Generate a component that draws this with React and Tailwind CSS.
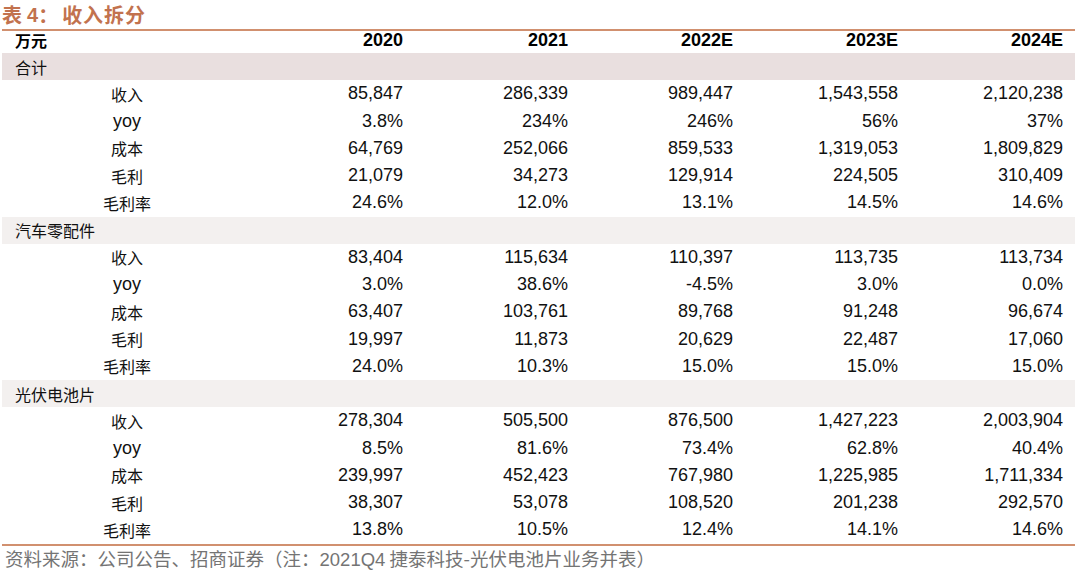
const cols = ["2020", "2021", "2022E", "2023E", "2024E"];

const sections = [
  {
    name: "合计",
    bg: "bg-[#e9dfdf]",
    rows: [
      ["收入", "85,847", "286,339", "989,447", "1,543,558", "2,120,238"],
      ["yoy", "3.8%", "234%", "246%", "56%", "37%"],
      ["成本", "64,769", "252,066", "859,533", "1,319,053", "1,809,829"],
      ["毛利", "21,079", "34,273", "129,914", "224,505", "310,409"],
      ["毛利率", "24.6%", "12.0%", "13.1%", "14.5%", "14.6%"],
    ],
  },
  {
    name: "汽车零配件",
    bg: "bg-[#f3f0ef]",
    rows: [
      ["收入", "83,404", "115,634", "110,397", "113,735", "113,734"],
      ["yoy", "3.0%", "38.6%", "-4.5%", "3.0%", "0.0%"],
      ["成本", "63,407", "103,761", "89,768", "91,248", "96,674"],
      ["毛利", "19,997", "11,873", "20,629", "22,487", "17,060"],
      ["毛利率", "24.0%", "10.3%", "15.0%", "15.0%", "15.0%"],
    ],
  },
  {
    name: "光伏电池片",
    bg: "bg-[#f3f0ef]",
    rows: [
      ["收入", "278,304", "505,500", "876,500", "1,427,223", "2,003,904"],
      ["yoy", "8.5%", "81.6%", "73.4%", "62.8%", "40.4%"],
      ["成本", "239,997", "452,423", "767,980", "1,225,985", "1,711,334"],
      ["毛利", "38,307", "53,078", "108,520", "201,238", "292,570"],
      ["毛利率", "13.8%", "10.5%", "12.4%", "14.1%", "14.6%"],
    ],
  },
];

const cjk = "font-['Noto_Sans_CJK_SC',sans-serif]";
const num = "font-['Liberation_Sans',Arial,sans-serif]";
const grid = "grid grid-cols-[250px_151px_165px_165px_165px_165px]";

export default function App() {
  return (
    <div className="w-[1080px] h-[576px] bg-white overflow-hidden">
      <div className="pl-[2px] pr-[5px]">
        <div className="h-[29px] flex items-center text-[#c2724e] font-bold text-[20px] leading-none">
          <span className={cjk}>表</span>
          <span className={`${num} ml-[5px]`}>4</span>
          <span className={cjk}>：</span>
          <span className={`${cjk} ml-[4px] tracking-[1px]`}>收入拆分</span>
        </div>
        <div className="h-[2px] bg-[#d1906f]" />
        <div className={`${grid} h-[22px] items-start`}>
          <div className={`${cjk} font-bold text-[16px] leading-[18px] pl-[13px] text-black`}>万元</div>
          {cols.map((c) => (
            <div key={c} className={`${num} font-bold text-[18px] leading-[18px] text-right text-black`}>
              {c}
            </div>
          ))}
        </div>
        {sections.map((s) => (
          <div key={s.name}>
            <div className={`${s.bg} h-[27.25px] flex items-center pl-[13px] ${cjk} text-[16px] text-[#111]`}>
              {s.name}
            </div>
            {s.rows.map((r) => (
              <div key={r[0]} className={`${grid} h-[27.25px] items-center text-[#111]`}>
                <div
                  className={`text-center ${r[0] === "yoy" ? `${num} text-[18px]` : `${cjk} text-[16px]`}`}
                >
                  {r[0]}
                </div>
                {r.slice(1).map((v, i) => (
                  <div key={i} className={`${num} text-[18px] text-right`}>
                    {v}
                  </div>
                ))}
              </div>
            ))}
          </div>
        ))}
        <div className="h-[2px] bg-[#d1906f]" />
        <div className={`${cjk} text-[18.5px] leading-[24px] text-[#747474] pl-[3px] whitespace-nowrap`}>
          资料来源：公司公告、招商证券（注：<span className={num}>2021Q4</span> 捷泰科技-光伏电池片业务并表）
        </div>
      </div>
    </div>
  );
}
